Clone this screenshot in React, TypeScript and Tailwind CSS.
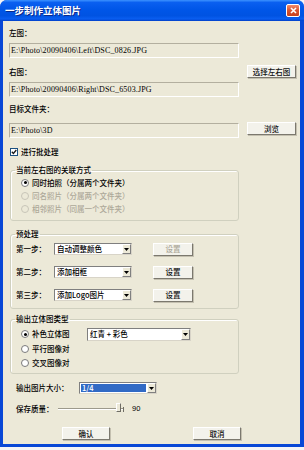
import type { ReactNode } from "react";

const Edit = ({ value, className = "" }: { value: string; className?: string }) => (
  <div
    className={`flex h-[15px] w-[230px] items-center border border-t-[#b3af9f] border-l-[#b3af9f] border-r-white border-b-white bg-[#ECE9D8] pl-[1px] font-['Liberation_Serif',serif] text-[8px] tracking-[0.15px] text-black ${className}`}
  >
    {value}
  </div>
);

const Btn = ({
  children,
  disabled,
  className = "",
}: {
  children: ReactNode;
  disabled?: boolean;
  className?: string;
}) => (
  <div
    className={`flex h-[13px] items-center justify-center border border-t-white border-l-white border-r-[#7b786e] border-b-[#7b786e] bg-[#f3f2eb] shadow-[1px_1px_0_#c4c0b0] ${
      disabled ? "text-[#aca899]" : "text-[#111]"
    } ${className}`}
  >
    {children}
  </div>
);

const Arrow = () => (
  <div className="flex w-[9px] items-center justify-center border border-t-white border-l-white border-r-[#808080] border-b-[#808080] bg-[#ECE9D8]">
    <svg width="5" height="3" viewBox="0 0 5 3">
      <path d="M0 0h5L2.5 3z" fill="#000" />
    </svg>
  </div>
);

const Select = ({
  value,
  highlight,
  className = "",
}: {
  value: string;
  highlight?: boolean;
  className?: string;
}) => (
  <div
    className={`flex h-[12px] border border-t-[#7f7f7f] border-l-[#7f7f7f] border-r-[#d8d4c8] border-b-[#d8d4c8] bg-white ${className}`}
  >
    <div className="flex flex-1 items-center p-[1px]">
      <span
        className={`flex h-full flex-1 items-center pl-[1px] leading-none ${
          highlight ? "bg-[#316ac5] text-white" : "text-black"
        }`}
      >
        {value}
      </span>
    </div>
    <Arrow />
  </div>
);

const Radio = ({
  label,
  checked,
  disabled,
  className = "",
}: {
  label: string;
  checked?: boolean;
  disabled?: boolean;
  className?: string;
}) => (
  <div className={`flex items-center gap-[3px] ${className}`}>
    <span
      className={`flex h-[8px] w-[8px] items-center justify-center rounded-full border ${
        disabled ? "border-[#c8c5b8] bg-[#ECE9D8]" : "border-[#7a7a7a] bg-white"
      }`}
    >
      {checked && <span className="h-[3px] w-[3px] rounded-full bg-black" />}
    </span>
    <span className={`leading-none ${disabled ? "text-[#aca899]" : "text-black"}`}>{label}</span>
  </div>
);

const Group = ({
  title,
  className = "",
  children,
}: {
  title: string;
  className?: string;
  children: ReactNode;
}) => (
  <fieldset
    className={`ml-[1px] w-[229px] rounded-[3px] border border-[#d0d0bf] shadow-[inset_1px_1px_0_#fff] ${className}`}
  >
    <legend className="ml-[4px] h-[10px] px-[1px] leading-[10px] text-black">{title}</legend>
    {children}
  </fieldset>
);

const App = () => {
  return (
    <div className="h-[450px] w-[304px] bg-[#f4f4f6]">
      <div className="flex h-[447px] w-[304px] flex-col overflow-hidden rounded-t-[7px] bg-[#0847d6] font-['Noto_Sans_CJK_SC',sans-serif] text-[7.5px] font-medium">
        {/* Title bar */}
        <div className="flex h-[21px] items-center justify-between bg-[linear-gradient(to_bottom,#3c92ff_0%,#0a5ff0_12%,#0056e8_45%,#0053e2_75%,#0a5ef0_90%,#003fc8_100%)] pl-[5px] pr-[4px]">
          <span className="text-[9.5px] font-bold text-white [text-shadow:1px_1px_0_#0a2a8a]">
            一步制作立体图片
          </span>
          <div className="flex h-[13px] w-[14px] items-center justify-center rounded-[2px] border border-white bg-[linear-gradient(to_bottom,#f28b6c,#d9532f_50%,#c6411d)]">
            <svg width="7" height="7" viewBox="0 0 7 7">
              <path d="M1 1l5 5M6 1L1 6" stroke="#fff" strokeWidth="1.6" />
            </svg>
          </div>
        </div>

        {/* Client */}
        <div className="mb-[3px] ml-[3px] mr-[4px] flex flex-1 flex-col bg-[#ECE9D8] pl-[6px] pr-[4px] text-black">
          <div className="mt-[7px] h-[10px] leading-[10px]">左图：</div>
          <Edit className="mt-[5px]" value="E:\Photo\20090406\Left\DSC_0826.JPG" />

          <div className="mt-[7px] flex h-[13px] items-center justify-between">
            <span>右图：</span>
            <Btn className="w-[49px]">选择左右图</Btn>
          </div>
          <Edit className="mt-[4px]" value="E:\Photo\20090406\Right\DSC_6503.JPG" />

          <div className="mt-[7px] h-[10px] leading-[10px]">目标文件夹：</div>
          <div className="mt-[8px] flex items-start justify-between">
            <Edit className="mt-[1px]" value="E:\Photo\3D" />
            <Btn className="w-[49px]">浏览</Btn>
          </div>

          <div className="mt-[9px] flex h-[10px] items-center gap-[3px] pl-[1px]">
            <span className="flex h-[8px] w-[8px] items-center justify-center border border-[#1c5180] bg-white">
              <svg width="6" height="6" viewBox="0 0 6 6">
                <path d="M0.8 2.8l1.6 1.7L5.3 1" stroke="#1a1a1a" strokeWidth="1.3" fill="none" />
              </svg>
            </span>
            <span className="leading-none">进行批处理</span>
          </div>

          <Group title="当前左右图的关联方式" className="mt-[8px]">
            <div className="flex flex-col pb-[5px] pl-[10px] pt-[1px]">
              <Radio className="h-[13px]" checked label="同时拍照（分属两个文件夹）" />
              <Radio className="h-[13px]" disabled label="同名照片（分属两个文件夹）" />
              <Radio className="h-[13px]" disabled label="相邻照片（同属一个文件夹）" />
            </div>
          </Group>

          <Group title="预处理" className="mt-[8px]">
            <div className="flex flex-col gap-[11px] pb-[7px] pl-[5px] pt-[4px]">
              <div className="flex h-[12px] items-center">
                <span className="w-[38px] leading-none">第一步：</span>
                <Select className="w-[78px]" value="自动调整颜色" />
                <Btn disabled className="ml-[21px] h-[12px] w-[40px]">
                  设置
                </Btn>
              </div>
              <div className="flex h-[12px] items-center">
                <span className="w-[38px] leading-none">第二步：</span>
                <Select className="w-[78px]" value="添加相框" />
                <Btn className="ml-[21px] h-[12px] w-[40px]">设置</Btn>
              </div>
              <div className="flex h-[12px] items-center">
                <span className="w-[38px] leading-none">第三步：</span>
                <Select className="w-[78px]" value="添加Logo图片" />
                <Btn className="ml-[21px] h-[12px] w-[40px]">设置</Btn>
              </div>
            </div>
          </Group>

          <Group title="输出立体图类型" className="mt-[5px]">
            <div className="flex flex-col pb-[4px] pl-[10px] pt-[3px]">
              <div className="flex h-[14px] items-center">
                <Radio className="w-[66px]" checked label="补色立体图" />
                <Select className="h-[13px] w-[104px]" value="红青 + 彩色" />
              </div>
              <Radio className="mt-[1px] h-[13px]" label="平行图像对" />
              <Radio className="mt-[1px] h-[13px]" label="交叉图像对" />
            </div>
          </Group>

          <div className="mt-[8px] flex h-[12px] items-center pl-[7px]">
            <span className="w-[63px] leading-none">输出图片大小：</span>
            <Select className="w-[78px]" highlight value="1/4" />
          </div>

          <div className="mt-[8px] flex h-[14px] items-center pl-[7px]">
            <span className="w-[42px] leading-none">保存质量：</span>
            <div className="relative flex h-[14px] w-[65px] items-center">
              <div className="h-[2px] w-full border-b border-t border-b-white border-t-[#9d9a8c]" />
              <div className="absolute left-[58px] top-[1px] flex flex-col items-center">
                <div className="h-[9px] w-[5px] border border-t-white border-l-white border-r-[#6f6d64] border-b-[#6f6d64] bg-[#ECE9D8]" />
              </div>
            </div>
            <div className="h-[5px] w-[1px] bg-[#6f6d64]" />
            <span className="ml-[8px] font-['Liberation_Sans',sans-serif] leading-none">90</span>
          </div>

          <div className="mt-[11px] flex pl-[53px]">
            <Btn className="w-[48px]">确认</Btn>
            <Btn className="ml-[83px] w-[48px]">取消</Btn>
          </div>
        </div>
      </div>
    </div>
  );
};

export default App;
